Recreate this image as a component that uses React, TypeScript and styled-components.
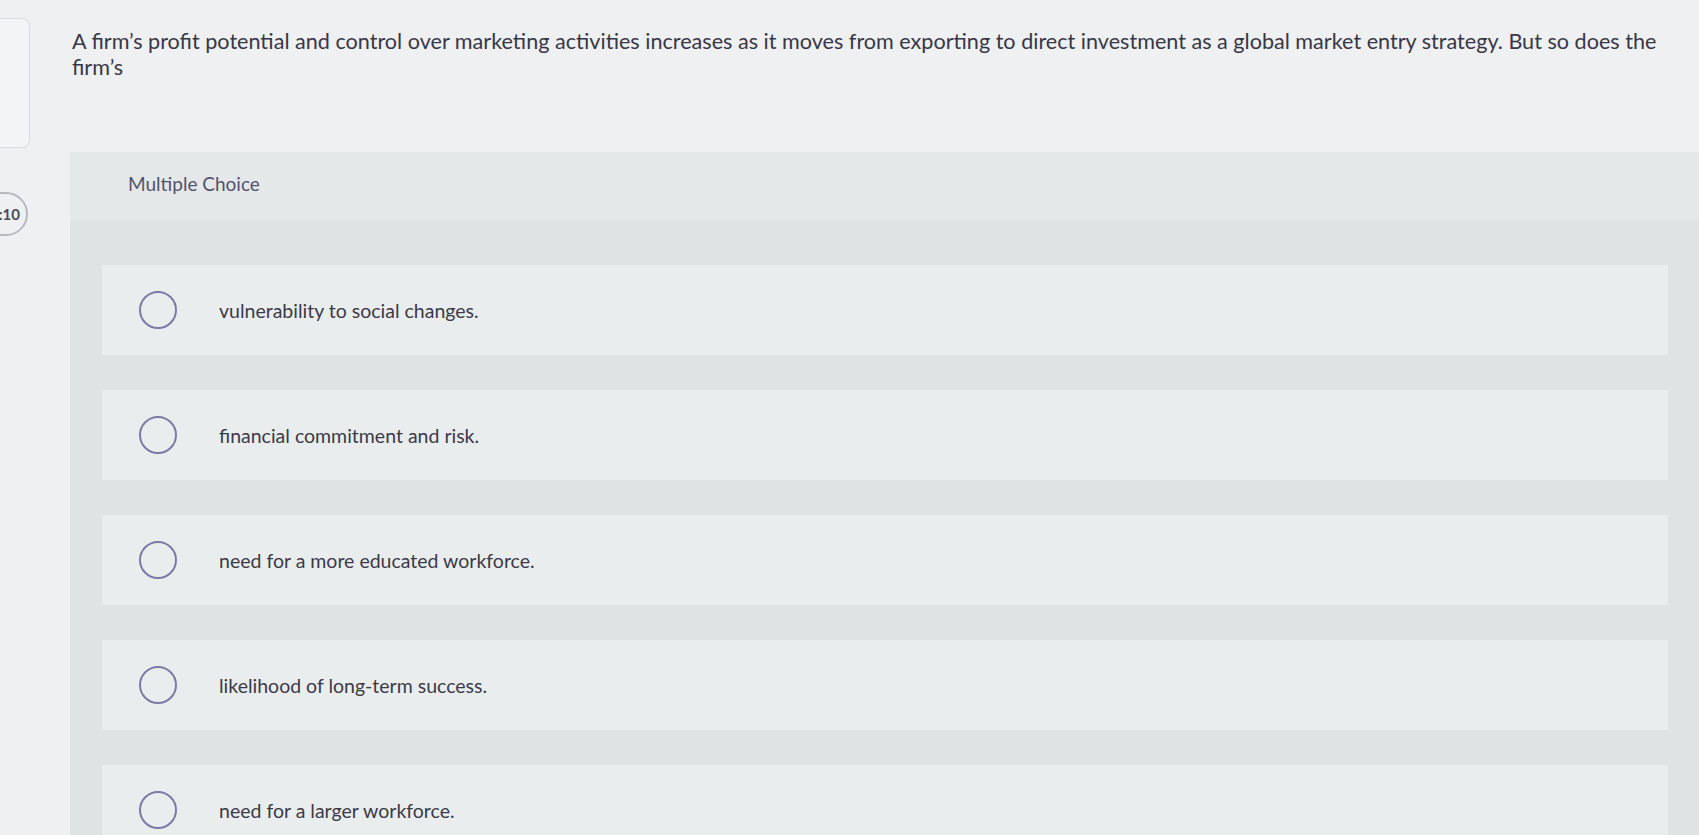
import React from "react";
import styled, { createGlobalStyle } from "styled-components";

const GlobalStyle = createGlobalStyle`
  html, body {
    margin: 0;
    padding: 0;
    background: #eef0f1;
    overflow: hidden;
  }
  body {
    font-family: Lato, "Liberation Sans", Arial, sans-serif;
    -webkit-font-smoothing: antialiased;
  }
`;

const choices = [
  "vulnerability to social changes.",
  "financial commitment and risk.",
  "need for a more educated workforce.",
  "likelihood of long-term success.",
  "need for a larger workforce.",
];

export default function App() {
  return (
    <>
      <GlobalStyle />
      <Page>
        <Gutter>
          <SideCard />
          <TimerBadge>:10</TimerBadge>
        </Gutter>
        <Main>
          <Question>
            A firm’s profit potential and control over marketing activities increases as it moves from exporting to
            direct investment as a global market entry strategy. But so does the firm’s
          </Question>
          <ChoicePanel>
            <PanelHeader>Multiple Choice</PanelHeader>
            <OptionList>
              {choices.map((text) => (
                <Option key={text}>
                  <Radio />
                  <OptionText>{text}</OptionText>
                </Option>
              ))}
            </OptionList>
          </ChoicePanel>
        </Main>
      </Page>
    </>
  );
}

const Page = styled.div`
  display: flex;
  width: 1699px;
  height: 835px;
  overflow: hidden;
  background: #eef0f1;
`;

const Gutter = styled.div`
  width: 30px;
  flex-shrink: 0;
  display: flex;
  flex-direction: column;
`;

const SideCard = styled.div`
  margin-top: 18px;
  height: 128px;
  background: #f2f4f5;
  border: 1px solid #d9dcde;
  border-left: none;
  border-radius: 0 8px 8px 0;
`;

const TimerBadge = styled.div`
  margin-top: 44px;
  margin-left: -30px;
  width: 58px;
  height: 44px;
  box-sizing: border-box;
  border: 2px solid #b7babd;
  border-radius: 22px;
  display: flex;
  align-items: center;
  justify-content: flex-end;
  padding-right: 6px;
  font-size: 15px;
  font-weight: 700;
  color: #4a4a58;
  background: #eef0f1;
`;

const Main = styled.div`
  flex: 1;
  margin-left: 40px;
  padding-top: 28px;
  display: flex;
  flex-direction: column;
`;

const Question = styled.p`
  margin: 0 8px 0 2px;
  font-size: 21.6px;
  line-height: 26px;
  color: #383747;
`;

const ChoicePanel = styled.div`
  margin-top: 72px;
  flex: 1;
  background: #e0e3e4;
  display: flex;
  flex-direction: column;
`;

const PanelHeader = styled.div`
  height: 69px;
  box-sizing: border-box;
  padding: 21px 0 0 58px;
  background: #e5e8e9;
  font-size: 19px;
  line-height: 22px;
  color: #53526a;
`;

const OptionList = styled.div`
  display: flex;
  flex-direction: column;
  gap: 35px;
  padding: 44px 31px 0 32px;
`;

const Option = styled.div`
  height: 90px;
  flex-shrink: 0;
  display: flex;
  align-items: center;
  gap: 42px;
  padding-left: 37px;
  background: #eaedee;
`;

const Radio = styled.span`
  width: 38px;
  height: 38px;
  box-sizing: border-box;
  border: 2px solid #7c7ba6;
  border-radius: 50%;
  flex-shrink: 0;
`;

const OptionText = styled.span`
  font-size: 19.5px;
  color: #3b3a49;
`;
